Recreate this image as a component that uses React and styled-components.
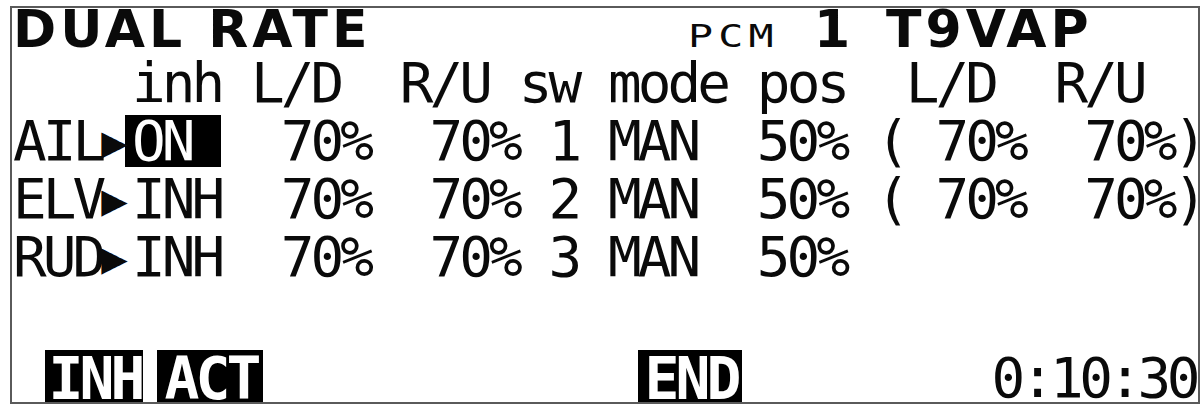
import React from "react";
import styled, { createGlobalStyle } from "styled-components";

const Global = createGlobalStyle`
  html, body { margin: 0; padding: 0; background: #ffffff; }
  body { width: 1201px; height: 404px; overflow: hidden; }
`;

const Screen = styled.div`
  box-sizing: border-box;
  margin: 6px 0 0 10px;
  width: 1190px;
  height: 398px;
  border: 2px solid #5a5a5a;
  display: flex;
  flex-direction: column;
  overflow: hidden;
  color: #0a0a0a;
  background: #fff;
`;

const TitleRow = styled.div`
  height: 46px;
  padding-left: 1px;
  display: grid;
  grid-template-columns: 675px 126px 72px 1fr;
  align-items: baseline;
  line-height: 42px;
  white-space: pre;
`;

const BoldText = styled.span`
  font-family: "DejaVu Sans", sans-serif;
  font-weight: 700;
  font-size: 52px;
  letter-spacing: ${(p) => p.$ls ?? 4}px;
`;

const SmallText = styled.span`
  display: inline-block;
  font-family: "DejaVu Sans Mono", monospace;
  font-size: 32px;
  letter-spacing: 4px;
  transform: scaleX(1.3);
  transform-origin: left bottom;
`;

const Row = styled.div`
  height: 58px;
  padding-left: 1px;
  font-family: "DejaVu Sans Mono", monospace;
  font-size: 56px;
  line-height: 58px;
  letter-spacing: -3.96px;
  white-space: pre;
`;

const Arrow = styled.span`
  display: inline-block;
  width: 29.75px;
  letter-spacing: 0;
  font-size: 44px;
  text-align: left;
  vertical-align: baseline;
  position: relative;
  left: -1px;
  top: -3px;
`;

const Inverse = styled.span`
  display: inline-block;
  line-height: 52px;
  margin-left: -7px;
  padding-left: 7px;
  background: #000;
  color: #fff;
`;

const Spacer = styled.div`
  flex: 1;
`;

const BottomRow = styled.div`
  height: 52px;
  display: flex;
  align-items: flex-end;
  padding-left: 33px;
`;

const SoftKey = styled.div`
  box-sizing: border-box;
  width: ${(p) => p.$w}px;
  height: 52px;
  margin-left: ${(p) => p.$ml ?? 0}px;
  align-self: flex-start;
  background: #000;
  color: #fff;
  overflow: hidden;
  text-align: center;
  font-family: "DejaVu Sans Mono", monospace;
  font-weight: 700;
  font-size: 58px;
  line-height: 58px;
  letter-spacing: -4px;
  padding-left: 2px;
  white-space: pre;
`;

const Clock = styled.div`
  margin-left: auto;
  padding-right: 2px;
  font-family: "DejaVu Sans Mono", monospace;
  font-size: 56px;
  line-height: 48px;
  letter-spacing: -4.5px;
  white-space: pre;
`;

const rows = [
  { name: "AIL", state: "ON", sw: "1", extra: true },
  { name: "ELV", state: "INH", sw: "2", extra: true },
  { name: "RUD", state: "INH", sw: "3", extra: false },
];

export default function App() {
  return (
    <>
      <Global />
      <Screen>
        <TitleRow>
          <BoldText>DUAL RATE</BoldText>
          <SmallText>PCM</SmallText>
          <BoldText>1</BoldText>
          <BoldText $ls={4}>T9VAP</BoldText>
        </TitleRow>
        <Row>{"    inh L/D  R/U sw mode pos  L/D  R/U"}</Row>
        {rows.map((r) => (
          <Row key={r.name}>
            {r.name}
            <Arrow>{"\u25B6"}</Arrow>
            {r.state === "ON" ? <Inverse>{"ON "}</Inverse> : r.state}
            {"  70%  70% " +
              r.sw +
              " MAN  50%" +
              (r.extra ? " ( 70%  70%)" : "")}
          </Row>
        ))}
        <Spacer />
        <BottomRow>
          <SoftKey $w={98}>INH</SoftKey>
          <SoftKey $w={106} $ml={14}>ACT</SoftKey>
          <SoftKey $w={104} $ml={375}>END</SoftKey>
          <Clock>0:10:30</Clock>
        </BottomRow>
      </Screen>
    </>
  );
}
